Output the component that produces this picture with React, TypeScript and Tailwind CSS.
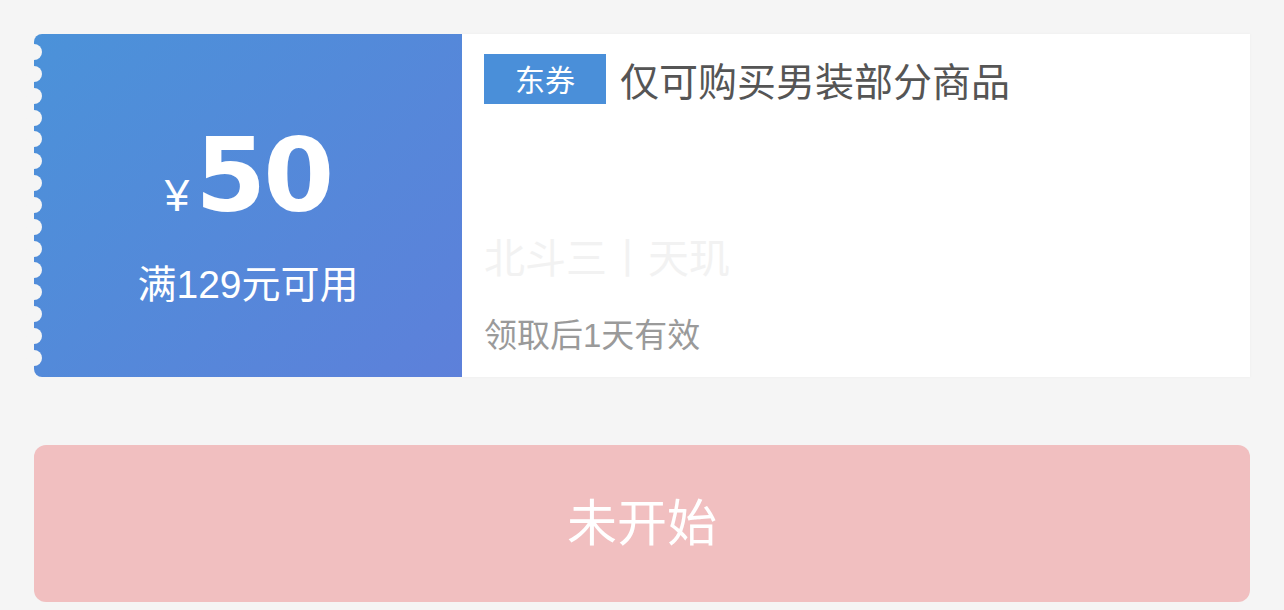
const scallops = Array.from({ length: 15 }, (_, i) => i);

function Coupon() {
  return (
    <div className="relative flex h-[343px] w-full">
      <div className="relative flex w-[428px] shrink-0 flex-col items-center rounded-l-[8px] bg-[linear-gradient(135deg,#4b92d9,#5d80da)] text-white">
        <div className="absolute -left-[8px] top-[10px] bottom-[11px] flex flex-col justify-between">
          {scallops.map((i) => (
            <span key={i} className="block h-[16px] w-[16px] rounded-full bg-[#f5f5f5]" />
          ))}
        </div>
        <div className="mt-[91px] flex h-[104px] items-baseline leading-none">
          <span className="mr-[6px] font-['Liberation_Sans',sans-serif] text-[44px]">¥</span>
          <span className="font-['DejaVu_Sans',sans-serif] text-[102px] font-bold tracking-[-3px]">50</span>
        </div>
        <div className="mt-[36px] h-[39px] font-['Liberation_Sans','Noto_Sans_CJK_SC',sans-serif] text-[39px] leading-none">
          满129元可用
        </div>
      </div>
      <div className="flex flex-1 flex-col bg-white pl-[22px] pt-[20px] font-['Noto_Sans_CJK_SC',sans-serif] shadow-[0_0_3px_rgba(0,0,0,0.04)]">
        <div className="flex items-center">
          <span className="flex h-[50px] w-[122px] items-center justify-center bg-[#4a8fd9] pb-[2px] text-[30px] leading-none text-white">
            东券
          </span>
          <span className="ml-[14px] text-[39px] leading-none text-[#555555]">仅可购买男装部分商品</span>
        </div>
        <div className="mt-[131px] text-[41px] leading-none text-[#f2f2f2]">北斗三丨天玑</div>
        <div className="mt-[43px] font-['Liberation_Sans','Noto_Sans_CJK_SC',sans-serif] text-[33px] leading-none text-[#9a9a9a]">
          领取后1天有效
        </div>
      </div>
    </div>
  );
}

export default function App() {
  return (
    <div className="min-h-[610px] w-full bg-[#f5f5f5] px-[34px] pt-[34px]">
      <Coupon />
      <button className="mt-[68px] flex h-[157px] w-full items-center justify-center rounded-[12px] bg-[#f1bfc0] pb-[10px] font-['Noto_Sans_CJK_SC',sans-serif] text-[50px] leading-none text-white">
        未开始
      </button>
    </div>
  );
}
